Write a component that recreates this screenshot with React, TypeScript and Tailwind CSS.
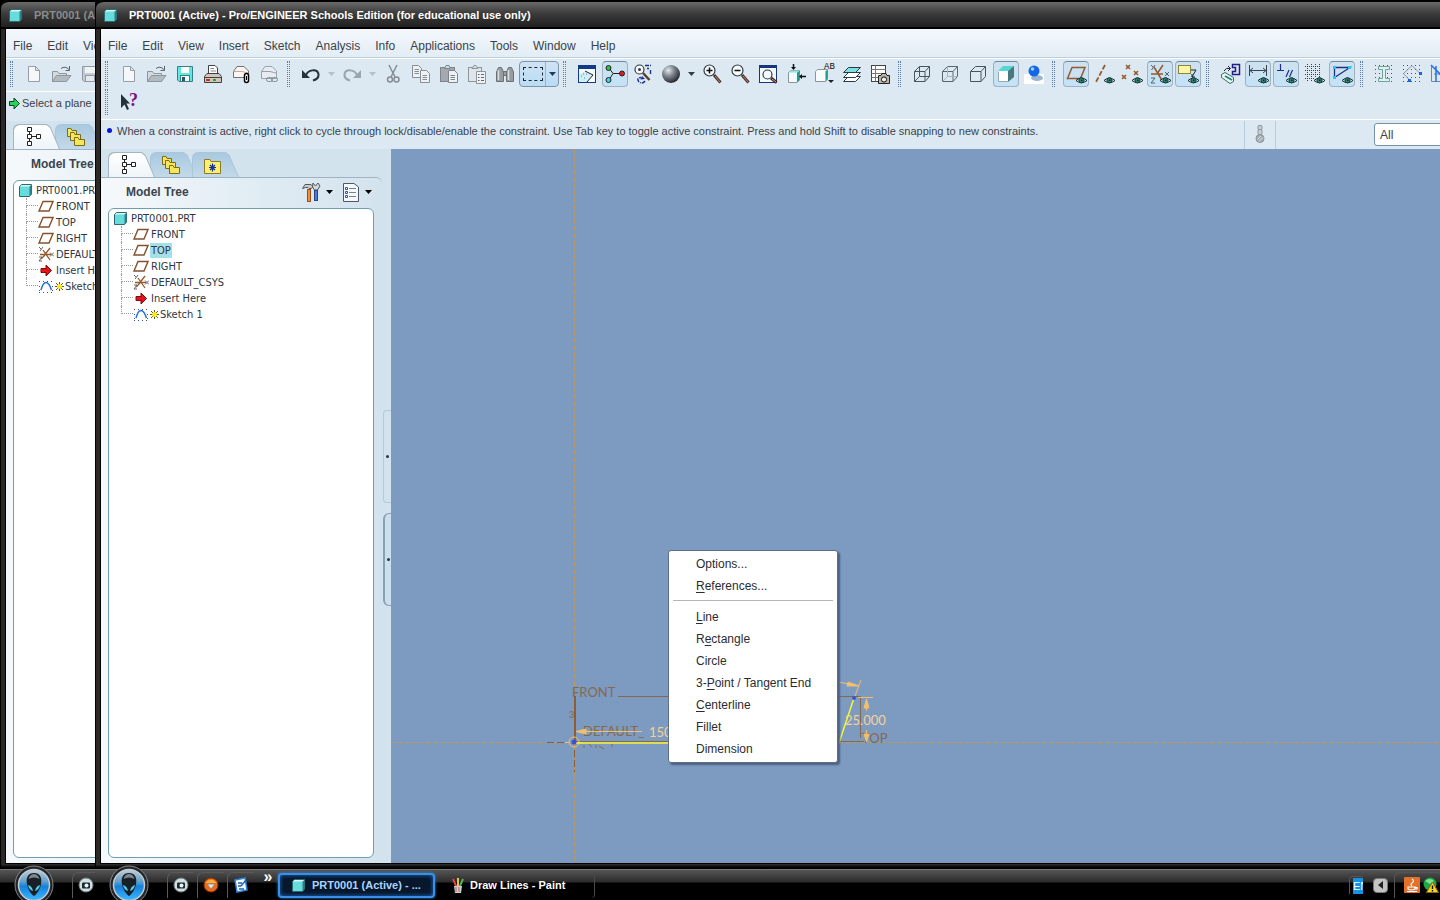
import type { ReactNode } from 'react';

function Eye() {
  return (
    <g>
      <path d="M12 18.5Q17.5 13.5 23 18.5Q17.5 23 12 18.5Z" fill="#dfeef0" stroke="#10282c" />
      <circle cx="17.5" cy="18.3" r="2.6" fill="#2f8577" stroke="#12383a" />
      <rect x="17" y="17.6" width="1.4" height="1.4" fill="#071a1a" />
    </g>
  );
}

function Lens({ cx, cy, r = 5 }: { cx: number; cy: number; r?: number }) {
  return (
    <g>
      <path d={`M${cx + r - 1} ${cy + r - 1}L20.5 20.5`} stroke="#4a2f2a" strokeWidth="3" />
      <path d={`M${cx + r} ${cy + r}L20 20`} stroke="#c58f78" strokeWidth="1" />
      <circle cx={cx} cy={cy} r={r} fill="#f4f9fc" stroke="#333a40" strokeWidth="1.2" />
    </g>
  );
}

const page = 'M0 0H6L9 3V12H0Z';

// All glyphs are drawn on a 24 x 24 grid
const glyphs: Record<string, ReactNode> = {
  new: <path d="M6.500 4.500H13.500L17.500 8.500V19.500H6.500ZM13.500 4.500V8.500H17.500" fill="#f4f8fb" stroke="#979ea6" />,
  open: (
    <g stroke="#8d959d">
      <path d="M2.500 19.500V9.500H7.500L9 11.500H16.500V19.500Z" fill="#d3d9de" />
      <path d="M2.500 19.500L6.500 13.500H21L16.500 19.500Z" fill="#b3bbc2" />
      <path d="M11 6.500Q15 3.500 19 7.500M19.500 4V8.500H15.500" fill="none" stroke="#5c646c" />
    </g>
  ),
  save: (
    <g>
      <path d="M4.500 4.500H19.500V19.500H6L4.500 18Z" fill="#5fe8df" stroke="#3a7f86" />
      <rect x="8" y="5" width="8" height="6" fill="#fff" />
      <rect x="7.500" y="13.500" width="9" height="6" fill="#f4fafa" stroke="#3a7f86" />
      <rect x="9" y="15" width="3" height="4" fill="#2b5560" />
    </g>
  ),
  saveOff: (
    <g>
      <path d="M4.500 4.500H19.500V19.500H6L4.500 18Z" fill="#c4cbd1" stroke="#9299a1" />
      <rect x="7" y="5" width="10" height="6" fill="#eef3f6" />
      <rect x="7.500" y="13.500" width="9" height="6" fill="#e4eaee" stroke="#9299a1" />
    </g>
  ),
  print: (
    <g stroke="#3f3f45">
      <path d="M7.500 12V3.500H14L16.500 6V12Z" fill="#fff" />
      <path d="M9.500 6.500H13M9.500 9H15" stroke="#888" />
      <path d="M3.500 14.500L6 11.500H18L20.500 14.500V20.500H3.500Z" fill="#cfc8b8" />
      <path d="M3.500 15.500H20.500" />
      <rect x="5" y="17" width="4" height="2" fill="#c8331f" stroke="none" />
      <rect x="12" y="17" width="3" height="2" fill="#2f9d44" stroke="none" />
    </g>
  ),
  mailClip: (
    <g stroke="#77706c">
      <path d="M4.500 9.500L8 4.500H15L19.500 9V15.500H4.500Z" fill="#f8f5f2" />
      <path d="M4.500 9.500H13L19 11" fill="none" stroke="#c9a596" />
      <rect x="15.500" y="11.500" width="4" height="9" rx="2" fill="#fff" stroke="#000" strokeWidth="1.500" />
      <path d="M17.500 14V18" stroke="#000" />
    </g>
  ),
  mailLink: (
    <g stroke="#9aa1a8" fill="none">
      <path d="M4.500 9.500L8 4.500H15L19.500 9V16.500H4.500Z" fill="#e6ecf1" />
      <path d="M4.500 9.500H13L19 11" />
      <rect x="9.500" y="15.500" width="6" height="4" rx="2" stroke="#858c94" />
      <rect x="14.500" y="15.500" width="6" height="4" rx="2" stroke="#858c94" />
    </g>
  ),
  undo: (
    <g>
      <path d="M7 13C9 8 18 6 19.500 12Q20 17 14 18.500" fill="none" stroke="#25313b" strokeWidth="2" />
      <path d="M3 8V16H11Z" fill="#25313b" />
    </g>
  ),
  redo: (
    <g>
      <path d="M17 13C15 8 6 6 4.500 12Q4 17 10 18.500" fill="none" stroke="#9aa5ae" strokeWidth="2" />
      <path d="M21 8V16H13Z" fill="#9aa5ae" />
    </g>
  ),
  cut: (
    <g fill="none" stroke="#868d94" strokeWidth="1.500">
      <path d="M8 3L14 15M16 3L10 15" />
      <circle cx="9" cy="17.500" r="2.500" />
      <circle cx="15.500" cy="17.500" r="2.500" />
    </g>
  ),
  copy: (
    <g fill="#eef2f5" stroke="#878e95">
      <path d={page} transform="translate(3.500 3.500)" />
      <path d="M5.500 7.500H10M5.500 9.500H10M5.500 11.500H10" />
      <path d={page} transform="translate(11.500 8.500)" />
      <path d="M13.500 13.500H18M13.500 15.500H18M13.500 17.500H18" />
    </g>
  ),
  paste: (
    <g fill="#eef2f5" stroke="#7d848b">
      <rect x="3.500" y="5.500" width="14" height="14" fill="#a3a9af" />
      <path d="M7.500 6.500L9 3.500H12L13.500 6.500Z" fill="#d6dbdf" />
      <path d={page} transform="translate(11.500 8.500)" />
      <path d="M13.500 13.500H18M13.500 15.500H18M13.500 17.500H18" />
    </g>
  ),
  pasteSpecial: (
    <g fill="#eef2f5" stroke="#8d949b">
      <rect x="3.500" y="5.500" width="13" height="14" fill="#dfe5ea" />
      <path d="M7 6.500L9 3.500H11L13 6.500Z" fill="#d6dbdf" />
      <path d="M11.500 9.500H20.500V21.500H11.500Z" />
      <path d="M13 12.500H14.500M16 12.500H19M13 15.500H14.500M16 15.500H19M13 18.500H14.500M16 18.500H19" stroke="#5d646b" />
    </g>
  ),
  find: (
    <g fill="#979ca1" stroke="#6c7176">
      <path d="M5.500 5.500H8.500L10.500 10V19.500H3.500V10Z" />
      <path d="M15.500 5.500H18.500L20.500 10V19.500H13.500V10Z" />
      <rect x="10.500" y="9.500" width="3" height="4" />
      <path d="M5.500 8V18M15.500 8V18" stroke="#dadee1" strokeWidth="1.500" />
    </g>
  ),
  sketchView: (
    <g>
      <rect x="3.500" y="3.500" width="17" height="17" fill="#f8fcfe" stroke="#123a86" />
      <rect x="3" y="3" width="18" height="4" fill="#123a86" />
      <path d="M4 12L10 9L18 13L12 20H4Z" fill="#d2eef5" />
      <path d="M10 9L18 13L12 20" fill="none" stroke="#222" />
      <path d="M6 14H7M9 16H10M11 12H12M8 12H9" stroke="#3a8fc0" />
    </g>
  ),
  points: (
    <g stroke="#222">
      <path d="M6 6L10 11.500H19M10 11.500L6 18" fill="none" />
      <circle cx="5.500" cy="6" r="2.500" fill="#2dc24a" />
      <circle cx="19" cy="11.500" r="2.500" fill="#e21c1c" />
      <circle cx="5.500" cy="18" r="2.500" fill="#3fd5e2" />
    </g>
  ),
  refit: (
    <g>
      <path d="M12 11L18.500 18" stroke="#5a3b33" strokeWidth="2.500" />
      <circle cx="8.500" cy="7.500" r="4.500" fill="#f4f9fc" stroke="#333a40" strokeWidth="1.200" />
      <circle cx="8.500" cy="7.500" r="1.500" fill="#333a40" />
      <path d="M14 3.500H20M16 6.500H18M19.500 8V12M8 20Q5 16 10 15.500M14 19Q12 22 9 20.500" fill="none" stroke="#1b2f8f" strokeWidth="1.400" strokeDasharray="4 1" />
      <path d="M11 14L14 17L9.500 17.500Z" fill="#1b2f8f" />
    </g>
  ),
  sphere: (
    <g>
      <defs>
        <radialGradient id="ball" cx="0.350" cy="0.300" r="0.750">
          <stop offset="0" stopColor="#e4e8ec" />
          <stop offset="0.450" stopColor="#7c848c" />
          <stop offset="1" stopColor="#1e2227" />
        </radialGradient>
      </defs>
      <circle cx="12" cy="12" r="9" fill="url(#ball)" />
    </g>
  ),
  zoomIn: (
    <g>
      <Lens cx={9.5} cy={8.5} r={5.500} />
      <path d="M6.500 8.500H12.500M9.500 5.500V11.500" stroke="#111" strokeWidth="1.500" />
    </g>
  ),
  zoomOut: (
    <g>
      <Lens cx={9.5} cy={8.5} r={5.500} />
      <path d="M6.500 8.500H12.500" stroke="#111" strokeWidth="1.500" />
    </g>
  ),
  zoomFit: (
    <g>
      <rect x="3.500" y="3.500" width="17" height="17" fill="#f5fafd" stroke="#16367e" />
      <rect x="3" y="3" width="18" height="3" fill="#16367e" />
      <Lens cx={11.5} cy={12.5} r={4.500} />
    </g>
  ),
  reorient: (
    <g>
      <path d="M4.500 10.500L7 8.500H15.500V18L13 20.500H4.500Z" fill="#f3fafb" stroke="#8a9499" />
      <path d="M13 10.500L15.500 8.500V18L13 20.500Z" fill="#1f9a86" />
      <path d="M4.500 10.500L7 8.500H15.500L13 10.500Z" fill="#8fe4e0" />
      <path d="M9.500 2V6M22 14.500H17" stroke="#111" strokeWidth="1.500" />
      <path d="M7 5H12L9.500 8ZM18 12V17L15 14.500Z" fill="#111" />
    </g>
  ),
  views: (
    <g>
      <path d="M3.500 9.500L5.500 7.500H15.500V17L13.500 19.500H3.500Z" fill="#f7fbfc" stroke="#8a9499" />
      <path d="M13.500 9.500L15.500 7.500V17L13.500 19.500Z" fill="#1f9a86" />
      <text x="12" y="7" fontSize="9" fill="#111" fontFamily="Liberation Mono">AB</text>
      <path d="M16 18H22L19 21Z" fill="#222" />
    </g>
  ),
  layers: (
    <g stroke="#2b3a42">
      <path d="M3.500 19.500L8.500 14.500H20.500L15.500 19.500Z" fill="#fff" />
      <path d="M3.500 15.500L8.500 10.500H20.500L15.500 15.500Z" fill="#fff" />
      <path d="M3.500 10.500L8.500 5.500H20.500L15.500 10.500Z" fill="#7fe0e2" />
    </g>
  ),
  viewManager: (
    <g>
      <rect x="3.500" y="3.500" width="14" height="16" fill="#fff" stroke="#444" />
      <path d="M3.500 7.500H17.500M3.500 11.500H17.500M3.500 15.500H17.500M7.500 3.500V19.500" stroke="#777" />
      <path d="M10.500 13.500H13L14 11.500H18L19 13.500H21.500V21.500H10.500Z" fill="#b9b4a4" stroke="#222" />
      <circle cx="16" cy="17.500" r="2.600" fill="#eee" stroke="#111" />
    </g>
  ),
  wire: (
    <g fill="none" stroke="#4b545c">
      <path d="M4.500 9.500L9.500 4.500H19.500L15 9.500ZM4.500 9.500V19.500H15V9.500M15 19.500L19.500 14.500V4.500" />
      <path d="M9.500 4.500V14.500H19.500M9.500 14.500L4.500 19.500" />
    </g>
  ),
  hidden: (
    <g fill="none" stroke="#5c656d">
      <path d="M4.500 9.500L9.500 4.500H19.500L15 9.500ZM4.500 9.500V19.500H15V9.500M15 19.500L19.500 14.500V4.500" />
      <path d="M9.500 4.500V14.500H19.500M9.500 14.500L4.500 19.500" stroke="#a9b3bb" />
    </g>
  ),
  noHidden: <path d="M4.500 9.500L9.500 4.500H19.500L15 9.500ZM4.500 9.500V19.500H15V9.500M15 19.500L19.500 14.500V4.500" fill="none" stroke="#4b545c" />,
  shaded: (
    <g>
      <path d="M4 9V20H14V9Z" fill="#fff" />
      <path d="M4 9L9 4H20L14 9Z" fill="#52d6d6" />
      <path d="M14 9L20 4V15L14 20Z" fill="#46787e" />
      <path d="M4.500 9.500V19.500H14" fill="none" stroke="#9aa8ae" />
    </g>
  ),
  realism: (
    <g>
      <path d="M2 12H22V22H2Z" fill="#fff" />
      <ellipse cx="15" cy="16" rx="6" ry="3" fill="#9bb4cf" />
      <circle cx="12" cy="9" r="5.500" fill="#1468e8" />
      <circle cx="10.500" cy="7" r="1.800" fill="#a5cdff" />
    </g>
  ),
  planes: (
    <g>
      <path d="M3.500 16.500L8 5.500H21L16.500 16.500Z" fill="none" stroke="#95592c" strokeWidth="1.500" />
      <Eye />
    </g>
  ),
  axes: (
    <g>
      <path d="M13 3L4 20" stroke="#95592c" strokeWidth="1.800" strokeDasharray="5 2" />
      <Eye />
    </g>
  ),
  datumPoints: (
    <g>
      <path d="M6 3L10 7M10 3L6 7M2 13L6 17M6 13L2 17M14 9L18 13M18 9L14 13" stroke="#95592c" strokeWidth="1.600" />
      <Eye />
    </g>
  ),
  csys: (
    <g>
      <path d="M3 12H15M9 12L15 3M6 5L15 20" stroke="#95592c" strokeWidth="1.500" />
      <path d="M3 3L5 5M7 3L3.500 8M3 16H7L3 21H7M17 10L21 14M21 10L17 14" stroke="#56616b" fill="none" />
      <Eye />
    </g>
  ),
  notes: (
    <g>
      <rect x="2.500" y="3.500" width="12" height="8" fill="#fbf6a4" stroke="#8b8540" />
      <path d="M15 8H20L16 15M16 12V15H19" fill="none" stroke="#222" />
      <Eye />
    </g>
  ),
  sketchOrient: (
    <g>
      <path d="M14.500 2.500H21.500V12.500H14.500V9.500H17.500V5.500H14.500Z" fill="none" stroke="#231f86" strokeWidth="1.500" />
      <path d="M6 9Q8 5 12 6.500M10 4L12.500 6.500L10 9" fill="none" stroke="#222" />
      <path d="M3.500 12.500L7 10.500L15.500 15.500V19.500L12 21.500L3.500 15.500Z" fill="#e8f6f4" stroke="#2f6f6a" />
      <path d="M7 14L14 18" stroke="#2f8577" strokeWidth="2" />
    </g>
  ),
  dims: (
    <g>
      <path d="M3.500 3V14M20.500 3V14M4 8.500H20M7 6L4 8.500L7 11M17 6L20 8.500L17 11" fill="none" stroke="#38424a" />
      <Eye />
    </g>
  ),
  constraints: (
    <g>
      <path d="M3 8.500H10M6.500 2V8.500M12 15L15 8M15.500 15L18.500 8" stroke="#1e2f80" strokeWidth="1.200" />
      <Eye />
    </g>
  ),
  grid: (
    <g>
      <path d="M3 4.500H19M3 8.500H19M3 12.500H19M3 16.500H13M5.500 2V19M9.500 2V19M13.500 2V15M17.500 2V15" stroke="#2c3b86" strokeDasharray="1 1" />
      <Eye />
    </g>
  ),
  vertices: (
    <g>
      <path d="M4.500 15.500V5.500H20L4.500 15.500" fill="none" stroke="#1e2f80" strokeWidth="1.300" />
      <path d="M3 4H6V7H3ZM18 4H21V7H18ZM3 14H6V17H3Z" fill="#30c5e8" />
      <Eye />
    </g>
  ),
  section: (
    <g>
      <path d="M3 3.500H21M3 7.500H21M3 11.500H21M3 15.500H21M3 19.500H21" stroke="#3d4ea0" strokeDasharray="1 3" />
      <path d="M6.500 4.500H17.500V7.500H13.500V16.500H17.500V19.500H6.500V16.500H10.500V7.500H6.500Z" fill="#dff1ee" stroke="#6fa39c" />
    </g>
  ),
  polygon: (
    <g>
      <path d="M3 3.500H21M3 7.500H21M3 11.500H21M3 15.500H21M3 19.500H21" stroke="#3d4ea0" strokeDasharray="1 3" />
      <path d="M3.500 11.500L12 3.500L20 11.500M3.500 11.500L10 18.500" fill="none" stroke="#8796a5" />
      <path d="M19 10H22V13H19ZM8 17H11V20H8Z" fill="#1b63d8" />
    </g>
  ),
  shadeLoop: (
    <g>
      <path d="M3.500 3.500V19.500H20M6 12H20" fill="none" stroke="#6f86a5" />
      <path d="M3 3L20 20M8 4V20" stroke="#2f77e0" strokeWidth="1.600" />
    </g>
  ),
  help: (
    <g>
      <path d="M4 4V18L7.500 14.500L10 20L12 19L9.500 13.500H13Z" fill="#27313a" />
      <text x="12" y="16" fontSize="18" fill="#7a1080" fontFamily="Liberation Serif" fontWeight="700">?</text>
    </g>
  ),
  tree: <path d="M5.500 2.500H9.500V6.500H5.500ZM5.500 9.500H9.500V13.500H5.500ZM5.500 16.500H9.500V20.500H5.500ZM14.500 9.500H18.500V13.500H14.500ZM7.500 6.500V9.500M7.500 13.500V16.500M9.500 11.500H14.500" fill="#fff" stroke="#222" />,
  folders: (
    <g fill="#f6e65a" stroke="#7b6a1c">
      <path d="M3.500 3.500H7L8 5.500H12.500V11.500H3.500Z" />
      <path d="M6.500 7.500H10L11 9.500H16.500V15.500H6.500Z" />
      <path d="M10.500 12.500H14L15 14.500H20.500V20.500H10.500Z" />
    </g>
  ),
  favorites: (
    <g>
      <path d="M3.500 6.500H9L10 8.500H19.500V20.500H3.500Z" fill="#fbf06b" stroke="#8c7b23" />
      <path d="M11.500 10.500V18.500M8 14.500H15M9 12L14 17M14 12L9 17" stroke="#1530a0" strokeWidth="1.200" />
    </g>
  ),
  tools: (
    <g>
      <path d="M2.500 8.500L5 4.500H11L13 7L11 8.500H9L8 7.500H5.500Z" fill="#c8cdd1" stroke="#555" />
      <rect x="7.500" y="9.500" width="3" height="12" fill="#f0913a" stroke="#9a4f17" />
      <path d="M13 3L15.500 6L18 3L20 6L17.500 10H14.500L12.500 7Z" fill="#d3d8db" stroke="#555" />
      <rect x="14.500" y="10.500" width="3" height="10" fill="#4b7ed0" stroke="#274a86" />
    </g>
  ),
  list: (
    <g>
      <path d="M4.500 3.500H15L19.500 7V21.500H4.500Z" fill="#f4f8fb" stroke="#4c5965" />
      <path d="M10 8.500H17M10 12.500H17M10 16.500H17" stroke="#75838f" />
      <path d="M6.500 7.500H8.500V9.500H6.500ZM6.500 11.500H8.500V13.500H6.500ZM6.500 15.500H8.500V17.500H6.500Z" fill="none" stroke="#3c4fa0" />
    </g>
  ),
  thermo: (
    <g fill="#c9cfd3" stroke="#8c9398">
      <rect x="10" y="2.500" width="4" height="4" rx="1" />
      <rect x="10" y="6.500" width="4" height="5" rx="1" />
      <circle cx="12" cy="15.500" r="4" fill="#a4abb0" />
      <path d="M9.500 16.500L13 13M11 18.500L15 14.500" stroke="#dfe4e7" />
    </g>
  ),
};

function Glyph({ name }: { name: string }) {
  return (
    <svg viewBox="0 0 24 24" className="h-6 w-6 shrink-0" fill="none" aria-hidden="true">
      {glyphs[name]}
    </svg>
  );
}

function Cube() {
  return (
    <svg viewBox="0 0 13 13" className="h-[13px] w-[13px] shrink-0" aria-hidden="true">
      <path d="M0.500 2.500L2.500 0.500H12.500V10L10.500 12.500H0.500Z" fill="#66dcdc" stroke="#2c6a70" />
      <path d="M10.500 2.500L12.500 0.500V10L10.500 12.500Z" fill="#2e7f85" />
      <path d="M1 2.500L2.500 1H12L10.500 2.500Z" fill="#d5f8f7" />
    </svg>
  );
}

function Caret({ className }: { className: string }) {
  return (
    <svg viewBox="0 0 7 4" className={`h-1 w-[7px] shrink-0 ${className}`} aria-hidden="true">
      <path d="M0 0H7L3.500 4Z" fill="currentColor" />
    </svg>
  );
}

interface Tool {
  icon: string;
  active?: boolean;
  menu?: 'on' | 'off';
}

const toolGroups: Tool[][] = [
  [{ icon: 'new' }, { icon: 'open' }, { icon: 'save' }, { icon: 'print' }, { icon: 'mailClip' }, { icon: 'mailLink' }],
  [
    { icon: 'undo', menu: 'off' },
    { icon: 'redo', menu: 'off' },
    { icon: 'cut' },
    { icon: 'copy' },
    { icon: 'paste' },
    { icon: 'pasteSpecial' },
    { icon: 'find' },
    { icon: 'select' },
  ],
  [
    { icon: 'sketchView' },
    { icon: 'points', active: true },
    { icon: 'refit' },
    { icon: 'sphere', menu: 'on' },
    { icon: 'zoomIn' },
    { icon: 'zoomOut' },
    { icon: 'zoomFit' },
    { icon: 'reorient' },
    { icon: 'views' },
    { icon: 'layers' },
    { icon: 'viewManager' },
  ],
  [{ icon: 'wire' }, { icon: 'hidden' }, { icon: 'noHidden' }, { icon: 'shaded', active: true }, { icon: 'realism' }],
  [
    { icon: 'planes', active: true },
    { icon: 'axes' },
    { icon: 'datumPoints' },
    { icon: 'csys', active: true },
    { icon: 'notes', active: true },
  ],
  [
    { icon: 'sketchOrient' },
    { icon: 'dims', active: true },
    { icon: 'constraints', active: true },
    { icon: 'grid' },
    { icon: 'vertices', active: true },
  ],
  [{ icon: 'section' }, { icon: 'polygon' }, { icon: 'shadeLoop' }],
];

const backTools: Tool[][] = [[{ icon: 'new' }, { icon: 'open' }, { icon: 'saveOff' }]];

function Handle() {
  return (
    <span className="flex h-7 w-[14px] shrink-0 gap-px py-px pl-1">
      <span className="w-px border-l border-dotted border-[#5f7fa6]" />
      <span className="w-px border-l border-dotted border-[#5f7fa6]" />
    </span>
  );
}

function SelectTool() {
  return (
    <span className="flex h-[26px] w-10 shrink-0 rounded-sm border border-[#7d93a8] bg-gradient-to-b from-[#cfe3f3] to-[#b9dcf5]">
      <button aria-label="Select" className="flex flex-1 items-center justify-center">
        <span className="h-[14px] w-5 border border-dashed border-[#1d2a36]" />
      </button>
      <button aria-label="Select options" className="flex w-[13px] items-center justify-center border-l border-[#9db4c8]">
        <Caret className="text-[#1e3a5c]" />
      </button>
    </span>
  );
}

function ToolButton({ icon, active, menu }: Tool) {
  if (icon === 'select') return <SelectTool />;
  return (
    <>
      <button
        aria-label={icon}
        className={`mx-px flex h-[26px] w-[26px] shrink-0 items-center justify-center rounded-sm ${
          active ? 'border border-[#9db1c3] border-t-[#7089a0] bg-gradient-to-b from-[#cfe1ef] to-[#c3e3f8]' : ''
        }`}
      >
        <Glyph name={icon} />
      </button>
      {menu ? (
        <span className="flex w-[13px] shrink-0 justify-center">
          <Caret className={menu === 'on' ? 'text-[#333d46]' : 'text-[#b3c0ca]'} />
        </span>
      ) : null}
    </>
  );
}

function Toolbar({ groups }: { groups: Tool[][] }) {
  return (
    <div className="flex h-7 items-center">
      {groups.map((group, i) => (
        <div key={i} className="flex shrink-0 items-center">
          <Handle />
          {group.map((tool) => (
            <ToolButton key={tool.icon} {...tool} />
          ))}
        </div>
      ))}
    </div>
  );
}

const treeIcons: Record<string, ReactNode> = {
  plane: <path d="M1 13L5 3.500H15L11 13Z" fill="none" stroke="#85502c" strokeWidth="1.400" />,
  csys: (
    <g fill="none">
      <path d="M2 8.500H13M7 8.500L12 2M5 4L12 14M7 9L3 13" stroke="#95592c" strokeWidth="1.300" />
      <path d="M1 1L3 3M5 1L2 5M1 11H4L1 15H4M12 6.500L16 10.500M16 6.500L12 10.500" stroke="#6b6266" />
    </g>
  ),
  insert: <path d="M3 6.500H8V3L13.500 8.500L8 14V10.500H3Z" fill="#e3131c" stroke="#7c0b10" />,
  sketch: (
    <g fill="none">
      <path d="M1 3.500H15M1 14.500H15" stroke="#3d4ea0" strokeDasharray="1 3" />
      <path d="M1.500 8V14M14.500 8V14" stroke="#3d4ea0" strokeDasharray="1 3" />
      <path d="M3 12Q5 4.500 8 4.500Q11 4.500 13.500 12" stroke="#1f73d6" strokeWidth="1.500" />
    </g>
  ),
};

const treeItems = [
  { icon: 'plane', label: 'FRONT' },
  { icon: 'plane', label: 'TOP' },
  { icon: 'plane', label: 'RIGHT' },
  { icon: 'csys', label: 'DEFAULT_CSYS' },
  { icon: 'insert', label: 'Insert Here' },
  { icon: 'sketch', label: 'Sketch 1' },
];

function ModelTree({ selected }: { selected?: string }) {
  return (
    <div className="ml-[7px] mr-2 flex-1 rounded-md border border-[#6d9fb0] bg-white pt-px font-['DejaVu_Sans_Condensed','Noto_Sans',sans-serif] text-[11px] leading-[14px] text-[#2f3742]">
      <div className="flex h-4 items-center gap-1 pl-[5px]">
        <Cube />
        <span className="pt-px">PRT0001.PRT</span>
      </div>
      <ul>
        {treeItems.map((item, i) => (
          <li key={item.label} className="flex h-4 items-center whitespace-nowrap pl-3">
            <span className="flex h-4 w-3 flex-col">
              <span className="h-2 border-b border-l border-dotted border-[#9a9a9a]" />
              {i < treeItems.length - 1 ? <span className="h-2 border-l border-dotted border-[#9a9a9a]" /> : null}
            </span>
            <svg viewBox="0 0 16 16" className="mr-px h-4 w-4 shrink-0" aria-hidden="true">
              {treeIcons[item.icon]}
            </svg>
            {item.icon === 'sketch' ? (
              <svg viewBox="0 0 9 9" className="h-[9px] w-[9px] shrink-0" aria-hidden="true">
                <path d="M4.500 0V9M0 4.500H9M1 1L8 8M8 1L1 8" stroke="#5c5c1c" strokeWidth="1" />
                <circle cx="4.500" cy="4.500" r="2.500" fill="#f4ea1c" />
              </svg>
            ) : null}
            <span className={item.label === selected ? 'bg-[#a4e0e8] px-px pt-px' : 'px-px pt-px'}>{item.label}</span>
          </li>
        ))}
      </ul>
    </div>
  );
}

function Tab({ icon, active }: { icon: string; active?: boolean }) {
  return (
    <button
      aria-label={icon}
      className={`relative -mr-[5px] h-[25px] w-[47px] rounded-tl-md pl-px pt-px [clip-path:polygon(0_0,72%_0,80%_12%,100%_100%,0_100%)] ${
        active ? 'z-10 bg-[#a3b4c2]' : 'bg-[#a9c6dc]'
      }`}
    >
      <span
        className={`flex h-6 w-[45px] items-center rounded-tl-md pl-2 [clip-path:polygon(0_0,72%_0,80%_12%,100%_100%,0_100%)] ${
          active ? 'bg-gradient-to-b from-white to-[#eef4f8]' : 'bg-gradient-to-b from-[#a9c9e0] to-[#c3d9e8]'
        }`}
      >
        <Glyph name={icon} />
      </span>
    </button>
  );
}

function Navigator({ tabs, selected }: { tabs: string[]; selected?: string }) {
  return (
    <div className="flex w-[290px] shrink-0 bg-[#d3e3ee]">
      <div className="flex w-[281px] flex-col">
        <div className="flex h-7 items-end pl-[7px]">
          {tabs.map((tab, i) => (
            <Tab key={tab} icon={tab} active={i === 0} />
          ))}
        </div>
        <div className="flex flex-1 flex-col rounded-tr-md border-t border-[#a0b3c2] bg-gradient-to-r from-[#f6f9fb] via-[#e2edf4] to-[#d3e3ee] pb-[5px]">
          <div className="flex h-[30px] items-center pb-0.5 pl-[25px] pr-2.5">
            <h2 className="flex-1 text-[12px] font-bold text-[#3b444d]">Model Tree</h2>
            <button aria-label="Settings" className="flex items-center gap-[2px]">
              <Glyph name="tools" />
              <Caret className="text-black" />
            </button>
            <button aria-label="Show" className="ml-1.5 flex items-center gap-[2px]">
              <Glyph name="list" />
              <Caret className="text-black" />
            </button>
          </div>
          <ModelTree selected={selected} />
        </div>
      </div>
      <div className="flex flex-1 flex-col justify-center gap-2.5 pl-px pt-1">
        <span className="flex h-[93px] items-center justify-center rounded-l-sm border border-r-0 border-[#b4cadb]">
          <span className="h-[3px] w-[3px] rounded-full bg-[#24384a]" />
        </span>
        <span className="flex h-[93px] items-center justify-center rounded-l-md border border-r-0 border-l-2 border-[#8a9fb0] bg-[#cbdfec]">
          <span className="h-[3px] w-[3px] rounded-full bg-[#24384a]" />
        </span>
      </div>
    </div>
  );
}

function Drawing() {
  return (
    <svg className="h-full w-full" fill="none" aria-hidden="true">
      <g stroke="#b99a62" strokeDasharray="5 2">
        <line x1="183.500" y1="0" x2="183.500" y2="100%" />
        <line x1="0" y1="593.500" x2="100%" y2="593.500" />
      </g>
      <g transform="translate(183 593)">
        <path d="M44 -45.500H286.500V-4M0 -0.500H290" stroke="#85694f" />
        <path d="M1 -46V0" stroke="#8f5d2e" strokeWidth="2" />
        <path d="M-27 0.500H-6M0.500 8V30" stroke="#8f5d2e" strokeDasharray="7 3" />
        <g fill="#85694f" fontFamily="Lato" fontSize="13">
          <text x="-2" y="-45">FRONT</text>
          <text x="9" y="-6">DEFAULT_</text>
          <text x="288" y="1">TOP</text>
          <text x="-5" y="-24" fontSize="9">3</text>
        </g>
        <path d="M10 3V6M15 2L18 5M22 3V6M25 4L30 7M38 2V5" stroke="#85694f" />
        <g stroke="#f0c070">
          <path d="M2 -10.500H68M264 -60L284 -56.500M281 -46L287 -62M284 -44.500H299M292.500 -43V-31M292.500 -12V0" />
          <path d="M2 -10.500L12 -13V-8ZM285 -56L274 -60L273 -56ZM292.500 -43L290 -34H295ZM292.500 0L290 -8H295Z" fill="#f0c070" />
          <circle cx="0" cy="0" r="5" />
          <path d="M-9 0.500H-5M5 0.500H9" />
        </g>
        <g fill="#f3d196" fontFamily="Lato" fontSize="13">
          <text x="75" y="-5">150</text>
          <text x="271" y="-17">25.000</text>
        </g>
        <path d="M0 1H265L280 -44" stroke="#f5f53c" strokeWidth="1.500" />
        <circle cx="0" cy="0" r="2.500" fill="#3b52d8" />
        <circle cx="280" cy="-44" r="2" fill="#3b52d8" />
      </g>
    </svg>
  );
}

const menuEntries: [string, string, string][][] = [
  [
    ['Options...', '', ''],
    ['', 'R', 'eferences...'],
  ],
  [
    ['', 'L', 'ine'],
    ['R', 'e', 'ctangle'],
    ['Circle', '', ''],
    ['3-', 'P', 'oint / Tangent End'],
    ['', 'C', 'enterline'],
    ['Fillet', '', ''],
    ['Dimension', '', ''],
  ],
];

function ContextMenu() {
  return (
    <div className="absolute left-[277px] top-[401px] w-[170px] rounded-[3px] border border-[#5d6f88] bg-white py-0.5 shadow-[2px_2px_2px_#4a5f80]">
      {menuEntries.map((section, i) => (
        <div key={i}>
          {i > 0 ? <hr className="mx-1 mb-[5px] mt-[3px] border-[#b5b5b5]" /> : null}
          {section.map(([before, key, after]) => (
            <button key={before + key + after} className="block h-[22px] w-full pl-[27px] text-left text-[12px] text-[#2b2b33]">
              {before}
              <span className="underline underline-offset-2">{key}</span>
              {after}
            </button>
          ))}
        </div>
      ))}
    </div>
  );
}

function TitleBar({ title, dim }: { title: string; dim?: boolean }) {
  return (
    <div className="flex h-[29px] shrink-0 items-center gap-3 whitespace-nowrap rounded-tl-lg border-b-2 border-t-2 border-black bg-gradient-to-b from-[#6a6a6a] via-[#3c3c3c] via-45% to-[#202020] pl-2 pt-px">
      <Cube />
      <span className={`text-[11px] font-bold ${dim ? 'text-[#8b8b8b]' : 'text-white'}`}>{title}</span>
    </div>
  );
}

const menus = ['File', 'Edit', 'View', 'Insert', 'Sketch', 'Analysis', 'Info', 'Applications', 'Tools', 'Window', 'Help'];

interface AppWindowProps {
  title: string;
  dim?: boolean;
  menuItems: string[];
  groups: Tool[][];
  secondRow?: boolean;
  message: ReactNode;
  children: ReactNode;
}

function AppWindow({ title, dim, menuItems, groups, secondRow, message, children }: AppWindowProps) {
  return (
    <section className="flex h-full flex-col rounded-tl-lg border-l border-black bg-[#2b2826]">
      <TitleBar title={title} dim={dim} />
      <div className="ml-1 flex min-h-0 flex-1 flex-col border-b border-l border-black bg-[#dce9f2]">
        <nav className="flex h-[29px] shrink-0 items-center gap-[15px] border-b border-[#bccfde] bg-gradient-to-b from-[#f4f8fc] to-[#e3edf5] pl-[7px] pt-1.5 text-[12px] text-[#3a4249]">
          {menuItems.map((menu) => (
            <button key={menu}>{menu}</button>
          ))}
        </nav>
        <div className="shrink-0 border-t border-white pb-[3px] pt-px">
          <Toolbar groups={groups} />
          {secondRow ? <Toolbar groups={[[{ icon: 'help' }]]} /> : null}
        </div>
        {message}
        {children}
      </div>
      <div className="h-[5px] shrink-0 bg-gradient-to-b from-[#333] to-black" />
    </section>
  );
}

function FrontMessage() {
  return (
    <div className="flex h-[30px] shrink-0 items-center whitespace-nowrap border-t border-white">
      <span className="mb-2 ml-1.5 h-[5px] w-[5px] rounded-full bg-[#0a14d8]" />
      <p className="mb-1.5 ml-[5px] flex-1 text-[11px] text-[#3a4249]">
        When a constraint is active, right click to cycle through lock/disable/enable the constraint. Use Tab key to toggle active
        constraint. Press and hold Shift to disable snapping to new constraints.
      </p>
      <span className="mr-[98px] flex h-7 w-8 items-center justify-center border-x border-[#b9ccda]">
        <Glyph name="thermo" />
      </span>
      <select
        aria-label="Selection filter"
        className="-mr-1 h-[23px] w-[70px] appearance-none rounded-[3px] border border-[#7391a8] bg-white pl-[5px] text-[12px] text-[#3a4249]"
      >
        <option>All</option>
      </select>
    </div>
  );
}

function BackMessage() {
  return (
    <div className="flex h-[30px] shrink-0 items-center gap-0.5 whitespace-nowrap border-t border-white pb-1.5 pl-[3px] text-[11px] text-[#3a4249]">
      <svg viewBox="0 0 11 13" className="h-[13px] w-[11px] shrink-0" aria-hidden="true">
        <path d="M0.500 4.500H5V1L10.500 6.500L5 12V8.500H0.500Z" fill="#25d65a" stroke="#123c1f" />
      </svg>
      <p>Select a plane or</p>
    </div>
  );
}

function Orb() {
  return (
    <button aria-label="Start" className="relative h-10 w-10 shrink-0">
      <svg viewBox="0 0 40 40" className="h-10 w-10" aria-hidden="true">
        <defs>
          <linearGradient id="orb" x1="0" y1="0" x2="0" y2="1">
            <stop offset="0" stopColor="#c3ced6" />
            <stop offset="0.400" stopColor="#5d9fcb" />
            <stop offset="0.550" stopColor="#1580dc" />
            <stop offset="1" stopColor="#3cb9ff" />
          </linearGradient>
        </defs>
        <circle cx="20" cy="20" r="19" fill="#22262a" stroke="#85898d" />
        <circle cx="20" cy="20" r="15.500" fill="url(#orb)" stroke="#c3c9ce" strokeWidth="1.500" />
        <path d="M20 8C13 8 12 14 13 19C14 25 18 30 20 31C22 30 26 25 27 19C28 14 27 8 20 8Z" fill="#1a1f24" />
        <path d="M14 20Q18 21 19 26Q15 25 14 20ZM26 20Q22 21 21 26Q25 25 26 20Z" fill="#4fd0ee" />
        <path d="M14.500 14Q16 9 20 9Q24 9 25.500 14Q20 11 14.500 14Z" fill="#7a858e" />
      </svg>
    </button>
  );
}

const launchers: Record<string, ReactNode> = {
  Camera: (
    <g>
      <circle cx="8" cy="8" r="7" fill="#d4dfe2" stroke="#6b7f86" />
      <rect x="4" y="5.500" width="8" height="6" rx="1" fill="#1c2a30" />
      <circle cx="8.500" cy="8.500" r="2" fill="#e9f2f4" />
    </g>
  ),
  Browser: (
    <g>
      <circle cx="8" cy="8" r="7" fill="#ef6a12" stroke="#8c2f08" />
      <path d="M2 6Q8 -1 14 6Z" fill="#fdb13a" />
      <path d="M4 7H12L8 12Z" fill="#e4e4e8" stroke="#8c8c94" />
    </g>
  ),
  Notes: (
    <g>
      <path d="M2 3L12 1L14 13L4 15Z" fill="#f2f9ff" stroke="#2e83d8" strokeWidth="1.500" />
      <path d="M5 6H9M5 9H8M6 12H11M13 3L8 9" stroke="#1c63b8" strokeWidth="1.400" />
    </g>
  ),
};

function Launcher({ name }: { name: string }) {
  return (
    <button
      aria-label={name}
      className="flex h-[26px] w-[27px] shrink-0 items-center justify-center rounded-tl-md border-l border-t border-[#5a5a5a] pb-0.5"
    >
      <svg viewBox="0 0 16 16" className="h-4 w-4" fill="none" aria-hidden="true">
        {launchers[name]}
      </svg>
    </button>
  );
}

function Taskbar() {
  return (
    <footer className="flex h-[31px] shrink-0 items-center whitespace-nowrap border-t border-[#777] bg-gradient-to-b from-[#555] from-0% via-[#2c2c2c] via-40% to-black to-45% text-[11px] font-bold text-white">
      <div className="flex w-[95px] shrink-0 items-center pl-[14px]">
        <Orb />
        <span className="ml-[18px] flex overflow-hidden">
          <Launcher name="Camera" />
        </span>
      </div>
      <div className="flex min-w-0 flex-1 items-center pl-[14px]">
        <Orb />
        <span className="ml-[18px] flex gap-[3px]">
          <Launcher name="Camera" />
          <Launcher name="Browser" />
          <Launcher name="Notes" />
        </span>
        <span className="mb-4 ml-1.5 mr-0.5 w-4 text-center text-[16px] leading-4">»</span>
        <button className="flex h-[25px] w-[157px] items-center gap-[7px] rounded-sm border-2 border-[#3a8fe6] bg-[#07172c] pl-3 text-[#a9d4ff] shadow-[0_0_3px_#2f8cf0,inset_0_0_4px_#1d6fd0]">
          <Cube />
          PRT0001 (Active) - ...
        </button>
        <button className="ml-[3px] flex h-[25px] w-[157px] items-center gap-1 rounded-sm border-r border-t border-[#4a4a4a] pl-3">
          <svg viewBox="0 0 16 16" className="h-4 w-4" fill="none" aria-hidden="true">
            <path d="M3 1L7 10" stroke="#e0483a" strokeWidth="2" />
            <path d="M8 0V10" stroke="#e9c246" strokeWidth="2" />
            <path d="M13 1L9 10" stroke="#58b05a" strokeWidth="2" />
            <path d="M4 8H12L11 15H5Z" fill="#c5d5dc" />
            <path d="M6 9V14M9 9V14" stroke="#d0503c" />
          </svg>
          Draw Lines - Paint
        </button>
        <div className="ml-auto flex items-center">
          <span className="mr-0.5 w-[14px] overflow-hidden rounded-tl-sm border-l border-t border-[#555] pl-[3px] pt-px">
            <span className="block bg-[#1591e6] py-px text-[11px] font-normal leading-[14px]">EN</span>
          </span>
          <button
            aria-label="Show hidden icons"
            className="ml-2 flex h-[15px] w-[15px] items-center justify-center rounded-sm border border-[#777] bg-[#c4c4c4]"
          >
            <svg viewBox="0 0 5 8" className="h-2 w-[5px]" aria-hidden="true">
              <path d="M5 0V8L0 4Z" fill="#222" />
            </svg>
          </button>
          <span className="ml-1.5 flex h-[26px] items-center gap-[3px] rounded-tl-md border-l border-t border-[#555] pb-0.5 pl-[9px]">
            <svg viewBox="0 0 16 16" className="h-4 w-4" fill="none" aria-hidden="true">
              <rect width="16" height="16" rx="1" fill="#e5702a" />
              <path d="M8 2Q11 4 8 6Q6 7.500 8 9M4 10H11V12Q7.500 14 4 12ZM11 10.500H13V12H11M3 14.500H13" stroke="#fff" strokeWidth="1.200" />
            </svg>
            <svg viewBox="0 0 16 16" className="mr-px h-4 w-4" aria-hidden="true">
              <circle cx="7" cy="7" r="6.500" fill="#1fa548" />
              <path d="M2 4Q7 0 11 4L7 7Z" fill="#7fe08c" />
              <path d="M9.500 5L15.500 15.500H3.500Z" fill="#f9cf2c" stroke="#8c6b0a" />
              <path d="M9.500 8.500V12M9.500 13V14.500" stroke="#111" strokeWidth="1.400" />
            </svg>
          </span>
        </div>
      </div>
    </footer>
  );
}

export default function App() {
  return (
    <div className="flex h-screen flex-col overflow-hidden bg-black font-['Liberation_Sans',Arial,sans-serif]">
      <main className="flex min-h-0 flex-1">
        <div className="w-[95px] shrink-0 overflow-hidden">
          <div className="h-full w-[300px]">
            <AppWindow title="PRT0001 (Active)" dim menuItems={menus.slice(0, 3)} groups={backTools} message={<BackMessage />}>
              <div className="flex min-h-0 flex-1">
                <Navigator tabs={['tree', 'folders']} />
              </div>
            </AppWindow>
          </div>
        </div>
        <div className="min-w-0 flex-1 overflow-hidden">
          <AppWindow
            title="PRT0001 (Active) - Pro/ENGINEER Schools Edition (for educational use only)"
            menuItems={menus}
            groups={toolGroups}
            secondRow
            message={<FrontMessage />}
          >
            <div className="flex min-h-0 flex-1">
              <Navigator tabs={['tree', 'folders', 'favorites']} selected="TOP" />
              <div className="relative min-w-0 flex-1 overflow-hidden bg-[#7d9ac0]">
                <Drawing />
                <ContextMenu />
              </div>
            </div>
          </AppWindow>
        </div>
      </main>
      <Taskbar />
    </div>
  );
}
